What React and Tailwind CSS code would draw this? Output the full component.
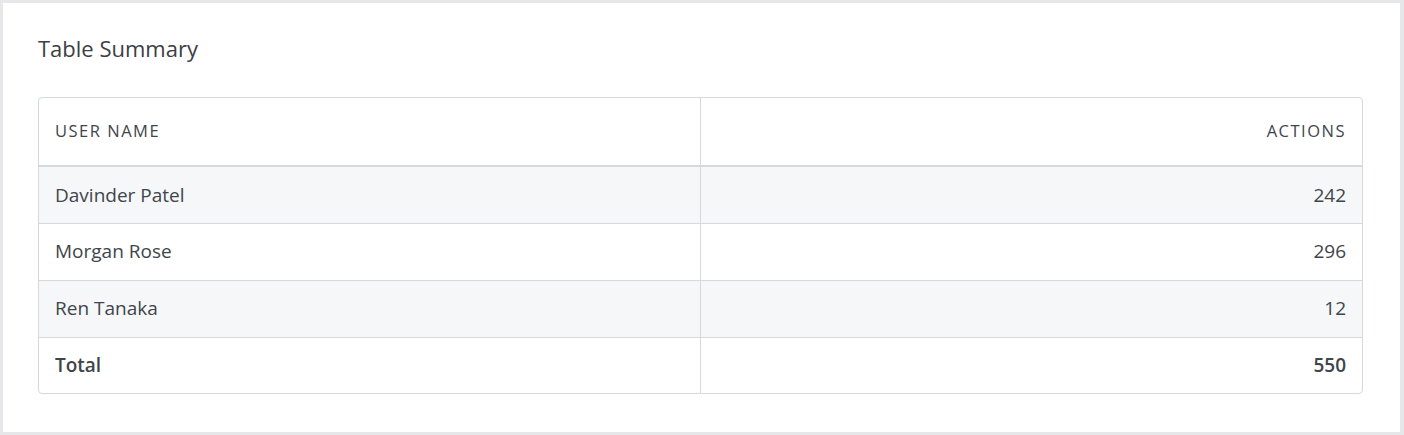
import React from 'react';

const rows = [
  { name: 'Davinder Patel', actions: 242 },
  { name: 'Morgan Rose', actions: 296 },
  { name: 'Ren Tanaka', actions: 12 },
];

export default function App() {
  const total = rows.reduce((s, r) => s + r.actions, 0);

  return (
    <div className="w-[1404px] h-[435px] border-[3px] border-r-4 border-[#e6e7e9] bg-white" style={{ fontFamily: '"Open Sans", sans-serif' }}>
      <div className="pt-[30px] pl-[35px] pr-[37px]">
        <h2 className="text-[22px] leading-[30px] text-[#3c3f44] mb-[34px]">Table Summary</h2>

        <div className="border border-[#d3d9dd] rounded-[4px] overflow-hidden">
          <table className="w-full border-collapse text-[#40454b]">
            <thead>
              <tr className="border-b-2 border-[#d3d9dd]">
                <th className="w-1/2 h-[68px] px-4 text-left font-medium text-[16.5px] tracking-[1.5px] uppercase border-r border-[#d3d9dd]">User Name</th>
                <th className="w-1/2 h-[68px] px-4 text-right font-medium text-[16.5px] tracking-[1.5px] uppercase">Actions</th>
              </tr>
            </thead>
            <tbody>
              {rows.map((r, i) => (
                <tr key={r.name} className={`border-b border-[#d3d9dd] ${i % 2 === 0 ? 'bg-[#f6f7f9]' : 'bg-white'}`}>
                  <td className="h-[57px] px-4 text-[19px] border-r border-[#d3d9dd]">{r.name}</td>
                  <td className="h-[57px] px-4 text-[19px] text-right">{r.actions}</td>
                </tr>
              ))}
              <tr>
                <td className="h-[56px] px-4 text-[19px] font-semibold border-r border-[#d3d9dd]">Total</td>
                <td className="h-[56px] px-4 text-[19px] font-semibold text-right">{total}</td>
              </tr>
            </tbody>
          </table>
        </div>
      </div>
    </div>
  );
}
